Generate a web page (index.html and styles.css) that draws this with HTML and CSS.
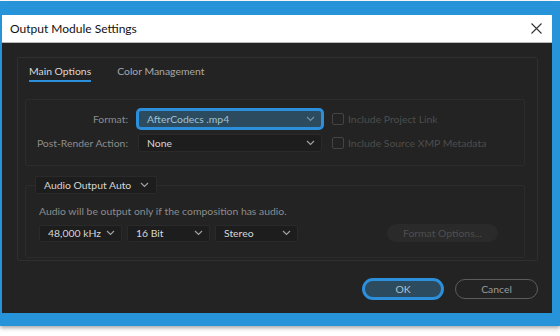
FILE: index.html
```html
<!DOCTYPE html>
<html lang="en">
<head>
    <meta charset="UTF-8">
    <meta name="viewport" content="width=device-width, initial-scale=1.0">
    <title>Output Module Settings</title>
    <link rel="stylesheet" href="styles.css">
</head>
<body>

    <div class="frame">
        <div class="window">
            <div class="titlebar">
                <span class="title">Output Module Settings</span>
                <svg class="close" width="11" height="11" viewBox="0 0 11 11">
                    <path d="M0.5 0.5 L10.5 10.5 M10.5 0.5 L0.5 10.5" stroke="#333" stroke-width="1.1" fill="none"/>
                </svg>
            </div>

            <div class="body">
                <div class="panel">
                    <div class="tabs">
                        <span class="tab active">Main Options</span>
                        <span class="tab">Color Management</span>
                    </div>

                    <div class="box">
                        <div class="row">
                            <label class="row-label">Format:</label>
                            <div class="select focused">
                                <span>AfterCodecs .mp4</span>
                                <svg class="chev" width="9" height="6" viewBox="0 0 9 6"><path d="M1 1 L4.5 4.5 L8 1" stroke="#6f93a8" stroke-width="1.2" fill="none"/></svg>
                            </div>
                            <div class="check"><span class="box-mark"></span>Include Project Link</div>
                        </div>
                        <div class="row">
                            <label class="row-label">Post-Render Action:</label>
                            <div class="select">
                                <span>None</span>
                                <svg class="chev" width="9" height="6" viewBox="0 0 9 6"><path d="M1 1 L4.5 4.5 L8 1" stroke="#a0a0a0" stroke-width="1.2" fill="none"/></svg>
                            </div>
                            <div class="check"><span class="box-mark"></span>Include Source XMP Metadata</div>
                        </div>
                    </div>

                    <fieldset class="audio">
                        <legend class="select legend">
                            <span>Audio Output Auto</span>
                            <svg class="chev" width="9" height="6" viewBox="0 0 9 6"><path d="M1 1 L4.5 4.5 L8 1" stroke="#a0a0a0" stroke-width="1.2" fill="none"/></svg>
                        </legend>
                        <p class="note">Audio will be output only if the composition has audio.</p>
                        <div class="audio-row">
                            <div class="select small">
                                <span>48,000 kHz</span>
                                <svg class="chev" width="9" height="6" viewBox="0 0 9 6"><path d="M1 1 L4.5 4.5 L8 1" stroke="#a0a0a0" stroke-width="1.2" fill="none"/></svg>
                            </div>
                            <div class="select small">
                                <span>16 Bit</span>
                                <svg class="chev" width="9" height="6" viewBox="0 0 9 6"><path d="M1 1 L4.5 4.5 L8 1" stroke="#a0a0a0" stroke-width="1.2" fill="none"/></svg>
                            </div>
                            <div class="select small">
                                <span>Stereo</span>
                                <svg class="chev" width="9" height="6" viewBox="0 0 9 6"><path d="M1 1 L4.5 4.5 L8 1" stroke="#a0a0a0" stroke-width="1.2" fill="none"/></svg>
                            </div>
                            <button class="pill disabled">Format Options...</button>
                        </div>
                    </fieldset>
                </div>

                <div class="footer">
                    <button class="pill ok">OK</button>
                    <button class="pill cancel">Cancel</button>
                </div>
            </div>
        </div>
    </div>

</body>
</html>
```

FILE: styles.css
```css
:root {
    --frame-blue: #2794da;
    --focus-blue: #2c8fdc;
    --focus-fill: #2c4b5f;
    --dialog-bg: #232323;
    --field-bg: #1d1d1d;
    --field-border: #2c2c2c;
    --line: #2f2f2f;
    --text: #d6d6d6;
    --muted: #8c8c8c;
    --dim: #4d4d4d;
    --ui-size: 10.4px;
}

body {
    margin: 0;
    background: #ffffff;
    font-family: Lato, "Noto Sans", sans-serif;
    width: 560px;
    height: 336px;
    overflow: hidden;
}

.frame {
    background: var(--frame-blue);
    margin-top: 1px;
    padding: 14px 8px 13px 2px;
    box-shadow: 0 2px 4px rgba(0, 0, 0, 0.35);
}

.window {
    width: 550px;
}

.titlebar {
    background: #ffffff;
    height: 28px;
    display: flex;
    align-items: center;
    justify-content: space-between;
    padding: 0 10px 0 8px;
    box-sizing: border-box;
    border-bottom: 1px solid #b9b9b9;
}

.title {
    font-size: 12px;
    color: #111;
}

.body {
    background: var(--dialog-bg);
    height: 270px;
    padding: 14px 14px 0 15px;
    box-sizing: border-box;
}

.panel {
    border: 1px solid var(--line);
    border-radius: 2px;
    height: 204px;
    box-sizing: border-box;
    padding: 0 12px 0 7px;
}

/* -- tabs -- */
.tabs {
    display: flex;
    gap: 26px;
    padding: 5px 0 0 4px;
}

.tab {
    font-size: var(--ui-size);
    line-height: 16px;
    color: #a8a8a8;
    padding-bottom: 1px;
}

.tab.active {
    color: #d8d8d8;
    border-bottom: 2px solid var(--focus-blue);
}

/* -- format box -- */
.box {
    margin-top: 17px;
    border: 1px solid var(--field-border);
    border-radius: 2px;
    padding: 10px 0 13px;
    display: flex;
    flex-direction: column;
    gap: 6px;
}

.row {
    display: flex;
    align-items: center;
}

.row-label {
    width: 102px;
    margin-right: 10px;
    text-align: right;
    font-size: var(--ui-size);
    color: var(--muted);
}

.select {
    display: flex;
    align-items: center;
    justify-content: space-between;
    box-sizing: border-box;
    height: 18px;
    width: 184px;
    padding: 0 6px 0 8px;
    background: var(--field-bg);
    border: 1px solid #2a2a2a;
    border-radius: 2px;
    font-size: var(--ui-size);
    color: var(--text);
}

.select.focused {
    background: var(--focus-fill);
    color: #9fc3d6;
    border-color: var(--focus-blue);
    box-shadow: 0 0 0 2px var(--focus-blue);
    border-radius: 3px;
}

.check {
    display: flex;
    align-items: center;
    margin-left: 10px;
    font-size: var(--ui-size);
    color: var(--dim);
}

.box-mark {
    width: 10px;
    height: 10px;
    border: 1px solid #444;
    border-radius: 2px;
    margin-right: 4px;
}

/* -- audio box -- */
.audio {
    margin: 10px 0 0;
    border: 1px solid var(--field-border);
    border-radius: 2px;
    padding: 0 26px 15px 13px;
}

.legend {
    width: 122px;
    margin-left: -4px;
    padding: 0 7px 0 8px;
}

.note {
    margin: 9px 0 0;
    font-size: var(--ui-size);
    line-height: 16px;
    color: var(--muted);
}

.audio-row {
    display: flex;
    align-items: center;
    gap: 5px;
    margin-top: 5px;
}

.select.small {
    width: 83px;
    height: 17px;
}

/* -- buttons -- */
.pill {
    font-family: Lato, "Noto Sans", sans-serif;
    font-size: var(--ui-size);
    border-radius: 12px;
    box-sizing: border-box;
    cursor: pointer;
}

.pill.disabled {
    margin-left: auto;
    width: 111px;
    height: 18px;
    background: #2a2a2a;
    border: none;
    color: #4f4f4f;
}

.footer {
    display: flex;
    justify-content: flex-end;
    gap: 11px;
    margin-top: 17px;
}

.pill.ok {
    width: 82px;
    height: 22px;
    background: var(--focus-fill);
    border: 3px solid var(--focus-blue);
    color: #a9c4d4;
}

.pill.cancel {
    width: 83px;
    height: 20px;
    margin-top: 1px;
    background: transparent;
    border: 1.5px solid #5c5c5c;
    color: #9a9a9a;
}
```
